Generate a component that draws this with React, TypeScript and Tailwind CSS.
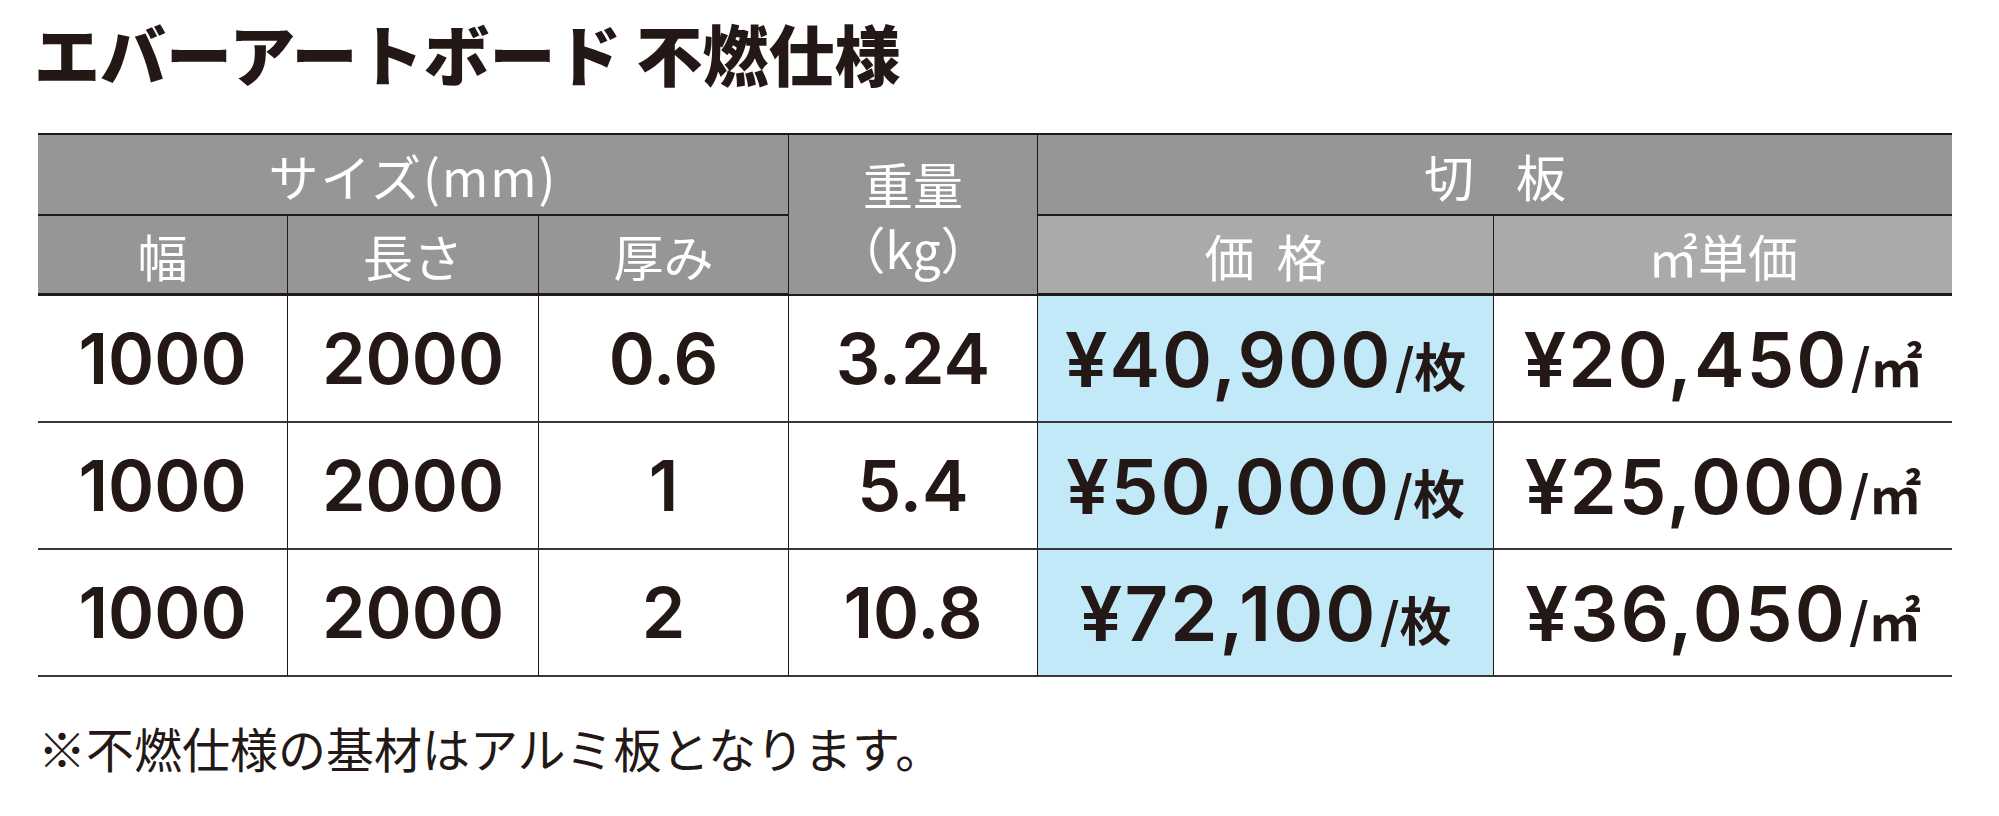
const ink = "text-[#231815]";

const jp = "font-['Noto_Sans_CJK_JP',sans-serif]";
const num = "font-['Inter','Liberation_Sans',sans-serif]";

type Row = {
	width: string;
	length: string;
	thick: string;
	weight: string;
	price: string;
	unit: string;
};

const rows: Row[] = [
	{ width: "1000", length: "2000", thick: "0.6", weight: "3.24", price: "¥40,900", unit: "¥20,450" },
	{ width: "1000", length: "2000", thick: "1", weight: "5.4", price: "¥50,000", unit: "¥25,000" },
	{ width: "1000", length: "2000", thick: "2", weight: "10.8", price: "¥72,100", unit: "¥36,050" },
];

const headCell = "flex items-center justify-center text-white text-[50px] leading-none font-normal";
const dataCell = "flex items-center justify-center border-b-2 border-[#3a3536]";
const sizeNum = `${num} text-[70px] font-semibold tracking-[0px] leading-none`;

export default function App() {
	return (
		<div className={`w-[1999px] h-[816px] bg-white px-[38px] ${jp} ${ink}`}>
			<div className="h-[104px] flex items-center">
				<h1 className="text-[66px] leading-none font-black -ml-[4px]">
					エバーアートボード 不燃仕様
				</h1>
			</div>

			<div className="mt-[29px] w-[1914px] grid grid-cols-[250px_251px_250px_249px_456px_458px] grid-rows-[81px_80px_127px_127px_127px] border-t-2 border-[#231815]">
				{/* header row 1 */}
				<div className={`${headCell} col-span-3 bg-[#959796] border-b-2 border-r border-[#231815] tracking-[2px]`}>
					サイズ(mm)
				</div>
				<div className={`${headCell} row-span-2 flex-col bg-[#959796] border-b-2 border-r border-[#231815] gap-[14px]`}>
					<span>重量</span>
					<span>（kg）</span>
				</div>
				<div className={`${headCell} col-span-2 bg-[#959796] border-b-2 border-[#231815] gap-[42px]`}>
					<span>切</span>
					<span>板</span>
				</div>

				{/* header row 2 */}
				<div className={`${headCell} bg-[#959796] border-b-[3px] border-r border-[#231815]`}>幅</div>
				<div className={`${headCell} bg-[#959796] border-b-[3px] border-r border-[#231815]`}>長さ</div>
				<div className={`${headCell} bg-[#959796] border-b-[3px] border-r border-[#231815]`}>厚み</div>
				<div className={`${headCell} bg-[#a9abaa] border-b-[3px] border-r border-[#231815] gap-[22px]`}>
					<span>価</span>
					<span>格</span>
				</div>
				<div className={`${headCell} bg-[#a9abaa] border-b-[3px] border-[#231815]`}>㎡単価</div>

				{rows.map((r, i) => (
					<div key={i} className="contents">
						<div className={`${dataCell} border-r border-r-[#231815]`}>
							<span className={sizeNum}>{r.width}</span>
						</div>
						<div className={`${dataCell} border-r border-r-[#231815]`}>
							<span className={sizeNum}>{r.length}</span>
						</div>
						<div className={`${dataCell} border-r border-r-[#231815]`}>
							<span className={sizeNum}>{r.thick}</span>
						</div>
						<div className={`${dataCell} border-r border-r-[#231815]`}>
							<span className={sizeNum}>{r.weight}</span>
						</div>
						<div className={`${dataCell} bg-[#c2e9f8] border-r border-r-[#231815]`}>
							<span className="leading-none whitespace-nowrap">
								<span className={`${num} text-[76px] font-semibold tracking-[2px]`}>{r.price}</span>
								<span className={`${num} text-[54px] font-medium ml-[2px]`}>/</span>
								<span className={`${jp} text-[52px] font-bold`}>枚</span>
							</span>
						</div>
						<div className={dataCell}>
							<span className="leading-none whitespace-nowrap">
								<span className={`${num} text-[76px] font-semibold tracking-[2px]`}>{r.unit}</span>
								<span className={`${num} text-[54px] font-medium ml-[2px]`}>/</span>
								<span className={`${jp} text-[52px] font-bold`}>㎡</span>
							</span>
						</div>
					</div>
				))}
			</div>

			<p className="mt-[46px] text-[48px] leading-[48px] font-normal">
				※不燃仕様の基材はアルミ板となります。
			</p>
		</div>
	);
}
